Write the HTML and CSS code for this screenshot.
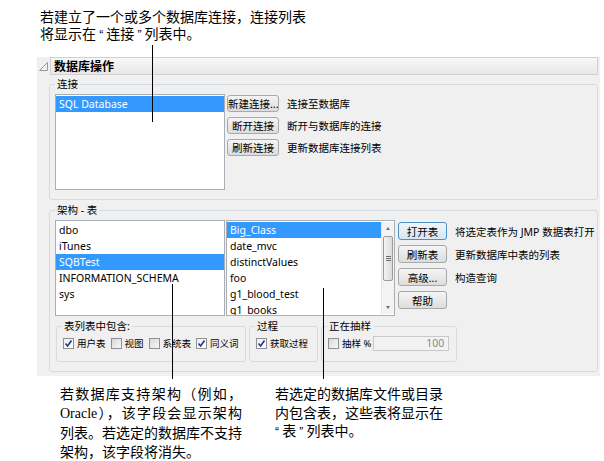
FILE: index.html
```html
<!DOCTYPE html>
<html lang="zh-CN">
<head>
  <meta charset="UTF-8" />
  <title>数据库操作</title>
  <link rel="stylesheet" href="styles.css">
</head>
<body>
  <div class="page">
    <p class="note note-top">若建立了一个或多个数据库连接，连接列表<br>将显示在 <span class="q">“</span> 连接 <span class="q">”</span> 列表中。</p>

    <div class="window">
      <div class="outline-head">
        <svg class="disclosure" width="9" height="9" viewBox="0 0 9 9"><path d="M8.5 0.5 L8.5 8.5 L0.5 8.5 Z" fill="none" stroke="#9a9a9a" /></svg>
        <div class="outline-title">数据库操作</div>
      </div>

      <div class="outline-body">
        <fieldset class="group">
          <legend>连接</legend>
          <div class="row">
            <ul class="listbox conn-list">
              <li class="sel">SQL Database</li>
            </ul>
            <div class="actions conn-actions">
              <div class="action"><button class="btn">新建连接...</button><span>连接至数据库</span></div>
              <div class="action"><button class="btn">断开连接</button><span>断开与数据库的连接</span></div>
              <div class="action"><button class="btn">刷新连接</button><span>更新数据库连接列表</span></div>
            </div>
          </div>
        </fieldset>

        <fieldset class="group schema">
          <legend>架构 - 表</legend>
          <div class="row">
            <ul class="listbox schema-list">
              <li>dbo</li>
              <li>iTunes</li>
              <li class="sel">SQBTest</li>
              <li>INFORMATION_SCHEMA</li>
              <li>sys</li>
            </ul>
            <div class="listbox table-list">
              <ul>
                <li class="sel">Big_Class</li>
                <li>date_mvc</li>
                <li>distinctValues</li>
                <li>foo</li>
                <li>g1_blood_test</li>
                <li>g1_books</li>
              </ul>
              <div class="scrollbar">
                <div class="sb-btn"><i class="arrow-up"></i></div>
                <div class="sb-thumb"><i></i><i></i><i></i></div>
                <div class="sb-track"></div>
                <div class="sb-btn"><i class="arrow-down"></i></div>
              </div>
            </div>
            <div class="actions table-actions">
              <div class="action"><button class="btn default">打开表</button><span>将选定表作为 JMP 数据表打开</span></div>
              <div class="action"><button class="btn">刷新表</button><span>更新数据库中表的列表</span></div>
              <div class="action"><button class="btn">高级...</button><span>构造查询</span></div>
              <div class="action"><button class="btn">帮助</button></div>
            </div>
          </div>

          <div class="options">
            <fieldset class="group sub sub-include">
              <legend>表列表中包含:</legend>
              <div class="checks">
                <span class="cb on"><svg width="9" height="9" viewBox="0 0 9 9"><path d="M1.5 4.5 L3.6 7 L7.5 1.5" /></svg></span><span class="lbl">用户表</span>
                <span class="cb"></span><span class="lbl">视图</span>
                <span class="cb"></span><span class="lbl">系统表</span>
                <span class="cb on"><svg width="9" height="9" viewBox="0 0 9 9"><path d="M1.5 4.5 L3.6 7 L7.5 1.5" /></svg></span><span class="lbl">同义词</span>
              </div>
            </fieldset>
            <fieldset class="group sub sub-proc">
              <legend>过程</legend>
              <div class="checks">
                <span class="cb on"><svg width="9" height="9" viewBox="0 0 9 9"><path d="M1.5 4.5 L3.6 7 L7.5 1.5" /></svg></span><span class="lbl">获取过程</span>
              </div>
            </fieldset>
            <fieldset class="group sub sub-sample">
              <legend>正在抽样</legend>
              <div class="checks">
                <span class="cb"></span><span class="lbl">抽样 %</span>
                <span class="num">100</span>
              </div>
            </fieldset>
          </div>
        </fieldset>
      </div>
    </div>

    <div class="notes-bottom">
      <p class="note just">
        <span>若数据库支持架构（例如，</span>
        <span><span class="serif">Oracle</span>），该字段会显示架构</span>
        <span>列表。若选定的数据库不支持</span>
        <span class="last">架构，该字段将消失。</span>
      </p>
      <p class="note note-right">若选定的数据库文件或目录<br>内包含表，这些表将显示在<br><span class="q">“</span> 表 <span class="q">”</span> 列表中。</p>
    </div>

    <span class="callout c1"></span>
    <span class="callout c2"></span>
    <span class="callout c3"></span>
  </div>
</body>
</html>
```

FILE: styles.css
```css
body {
  margin: 0;
  background: #fff;
  font-family: "Noto Sans", "Noto Sans CJK SC", sans-serif;
  color: #000;
}
.page {
  position: relative;
  width: 604px;
  height: 461px;
  overflow: hidden;
}
.note {
  margin: 0;
  font-family: "Noto Sans CJK SC", sans-serif;
  font-size: 14px;
  line-height: 17px;
}
.note .q {
  font-family: "Liberation Sans", sans-serif;
  font-size: 12px;
}
.note-top {
  height: 57px;
  padding: 8px 0 0 40px;
  box-sizing: border-box;
}

/* window */
.window {
  margin-left: 37px;
  width: 563px;
  background: #f0f0f0;
  padding-bottom: 4px;
  font-size: 10.5px;
}
.outline-head {
  display: flex;
  align-items: center;
  height: 18px;
}
.disclosure {
  margin: 1px 2px 0 2px;
}
.outline-title {
  flex: 1;
  height: 18px;
  box-sizing: border-box;
  margin-right: 2px;
  padding-left: 3px;
  border: 1px solid #d0d0d0;
  background: linear-gradient(#f8f8f8, #e8e8e8);
  font-family: "Noto Sans CJK SC", sans-serif;
  font-size: 12px;
  font-weight: bold;
  line-height: 16px;
}
.outline-body {
  padding: 3px 2px 0 12px;
}

/* group boxes */
.group {
  margin: 0;
  min-width: 0;
  padding: 4px 5px 9px;
  border: 1px solid #d5dbe0;
  border-radius: 3px;
}
.group legend {
  padding: 0 2px;
  line-height: 12px;
  font-size: 10.5px;
}
.schema {
  margin-top: 4px;
}
.row {
  display: flex;
  align-items: flex-start;
}

/* list boxes */
.listbox {
  margin: 0;
  padding: 1px 0;
  list-style: none;
  height: 96px;
  box-sizing: border-box;
  border: 1px solid #a9afb7;
  background: #fff;
  overflow: hidden;
}
.listbox ul {
  margin: 0;
  padding: 0;
  list-style: none;
  flex: 1;
}
.listbox li {
  height: 16px;
  line-height: 16px;
  padding-left: 3px;
  white-space: nowrap;
  font-size: 10.5px;
}
.listbox li.sel {
  background: #3399ff;
  color: #fff;
}
.conn-list,
.schema-list {
  width: 170px;
  flex-shrink: 0;
}
.table-list {
  display: flex;
  width: 169px;
  flex-shrink: 0;
  margin-left: 1px;
}
.scrollbar {
  display: flex;
  flex-direction: column;
  width: 12px;
  background: #f3f3f3;
  border-left: 1px solid #e6e6e6;
}
.sb-btn {
  height: 13px;
  display: flex;
  align-items: center;
  justify-content: center;
}
.arrow-up,
.arrow-down {
  width: 0;
  height: 0;
  border-left: 2.5px solid transparent;
  border-right: 2.5px solid transparent;
}
.arrow-up {
  border-bottom: 3px solid #707070;
}
.arrow-down {
  border-top: 3px solid #707070;
}
.sb-thumb {
  height: 43px;
  margin: 1px 1px 0;
  border: 1px solid #9b9b9b;
  border-radius: 2px;
  background: linear-gradient(90deg, #f4f4f4, #dadada);
  display: flex;
  flex-direction: column;
  align-items: center;
  justify-content: center;
  gap: 1px;
}
.sb-thumb i {
  width: 5px;
  height: 1px;
  background: #6a6a6a;
}
.sb-track {
  flex: 1;
}

/* buttons */
.actions {
  display: flex;
  flex-direction: column;
  gap: 5px;
}
.conn-actions {
  margin: 1px 0 0 2px;
}
.table-actions {
  margin: 2px 0 0 3px;
}
.action {
  display: flex;
  align-items: center;
  white-space: nowrap;
}
.action span {
  margin-left: 8px;
}
.btn {
  height: 18px;
  padding: 0;
  border: 1px solid #a8a8a8;
  border-radius: 3px;
  background: linear-gradient(#f5f5f5, #dcdcdc);
  font-family: "Noto Sans", "Noto Sans CJK SC", sans-serif;
  font-size: 10.5px;
  color: #000;
}
.conn-actions .btn {
  width: 52px;
  height: 17px;
}
.table-actions .btn {
  width: 49px;
}
.btn.default {
  border-color: #4f8fc8;
  background: linear-gradient(#eef5fb, #d6e6f3);
}

/* option group boxes */
.options {
  display: flex;
  gap: 3px;
  margin-top: 4px;
  padding-left: 1px;
}
.sub {
  padding: 4px 5px 11px;
  box-sizing: border-box;
}
.sub-include {
  width: 190px;
}
.sub-proc {
  width: 69px;
}
.sub-sample {
  width: 136px;
}
.checks {
  display: flex;
  align-items: center;
  height: 14px;
  padding-left: 1px;
  white-space: nowrap;
  font-size: 9.5px;
}
.cb {
  flex-shrink: 0;
  width: 11px;
  height: 11px;
  box-sizing: border-box;
  border: 1px solid #8e9094;
  background: linear-gradient(135deg, #d8d8d8, #f8f8f8);
  display: flex;
  align-items: center;
  justify-content: center;
}
.cb.on {
  background: linear-gradient(135deg, #eeeeee, #ffffff);
}
.cb svg path {
  fill: none;
  stroke: #23348c;
  stroke-width: 1.6;
}
.lbl {
  flex-shrink: 0;
  margin: 0 5px 0 3px;
}
.num {
  flex-shrink: 0;
  width: 76px;
  height: 15px;
  box-sizing: border-box;
  margin-left: -3px;
  padding-right: 4px;
  border: 1px solid #c9c9c9;
  background: #f2f2f2;
  color: #8a8a8a;
  text-align: right;
  line-height: 13px;
  font-size: 10.5px;
}

/* bottom annotations */
.notes-bottom {
  display: flex;
  padding-left: 60px;
  margin-top: 8px;
}
.notes-bottom .note {
  line-height: 18.6px;
}
.just {
  width: 182px;
}
.just > span {
  display: block;
  text-align: justify;
  text-align-last: justify;
}
.just > span.last {
  text-align-last: left;
}
.serif {
  font-family: "Liberation Serif", serif;
}
.note-right {
  margin-left: 33px;
}

/* callout lines */
.callout {
  position: absolute;
  width: 1px;
  background: #000;
}
.c1 {
  left: 152px;
  top: 45px;
  height: 77px;
}
.c2 {
  left: 172px;
  top: 284px;
  height: 95px;
}
.c3 {
  left: 323px;
  top: 288px;
  height: 91px;
}
```
